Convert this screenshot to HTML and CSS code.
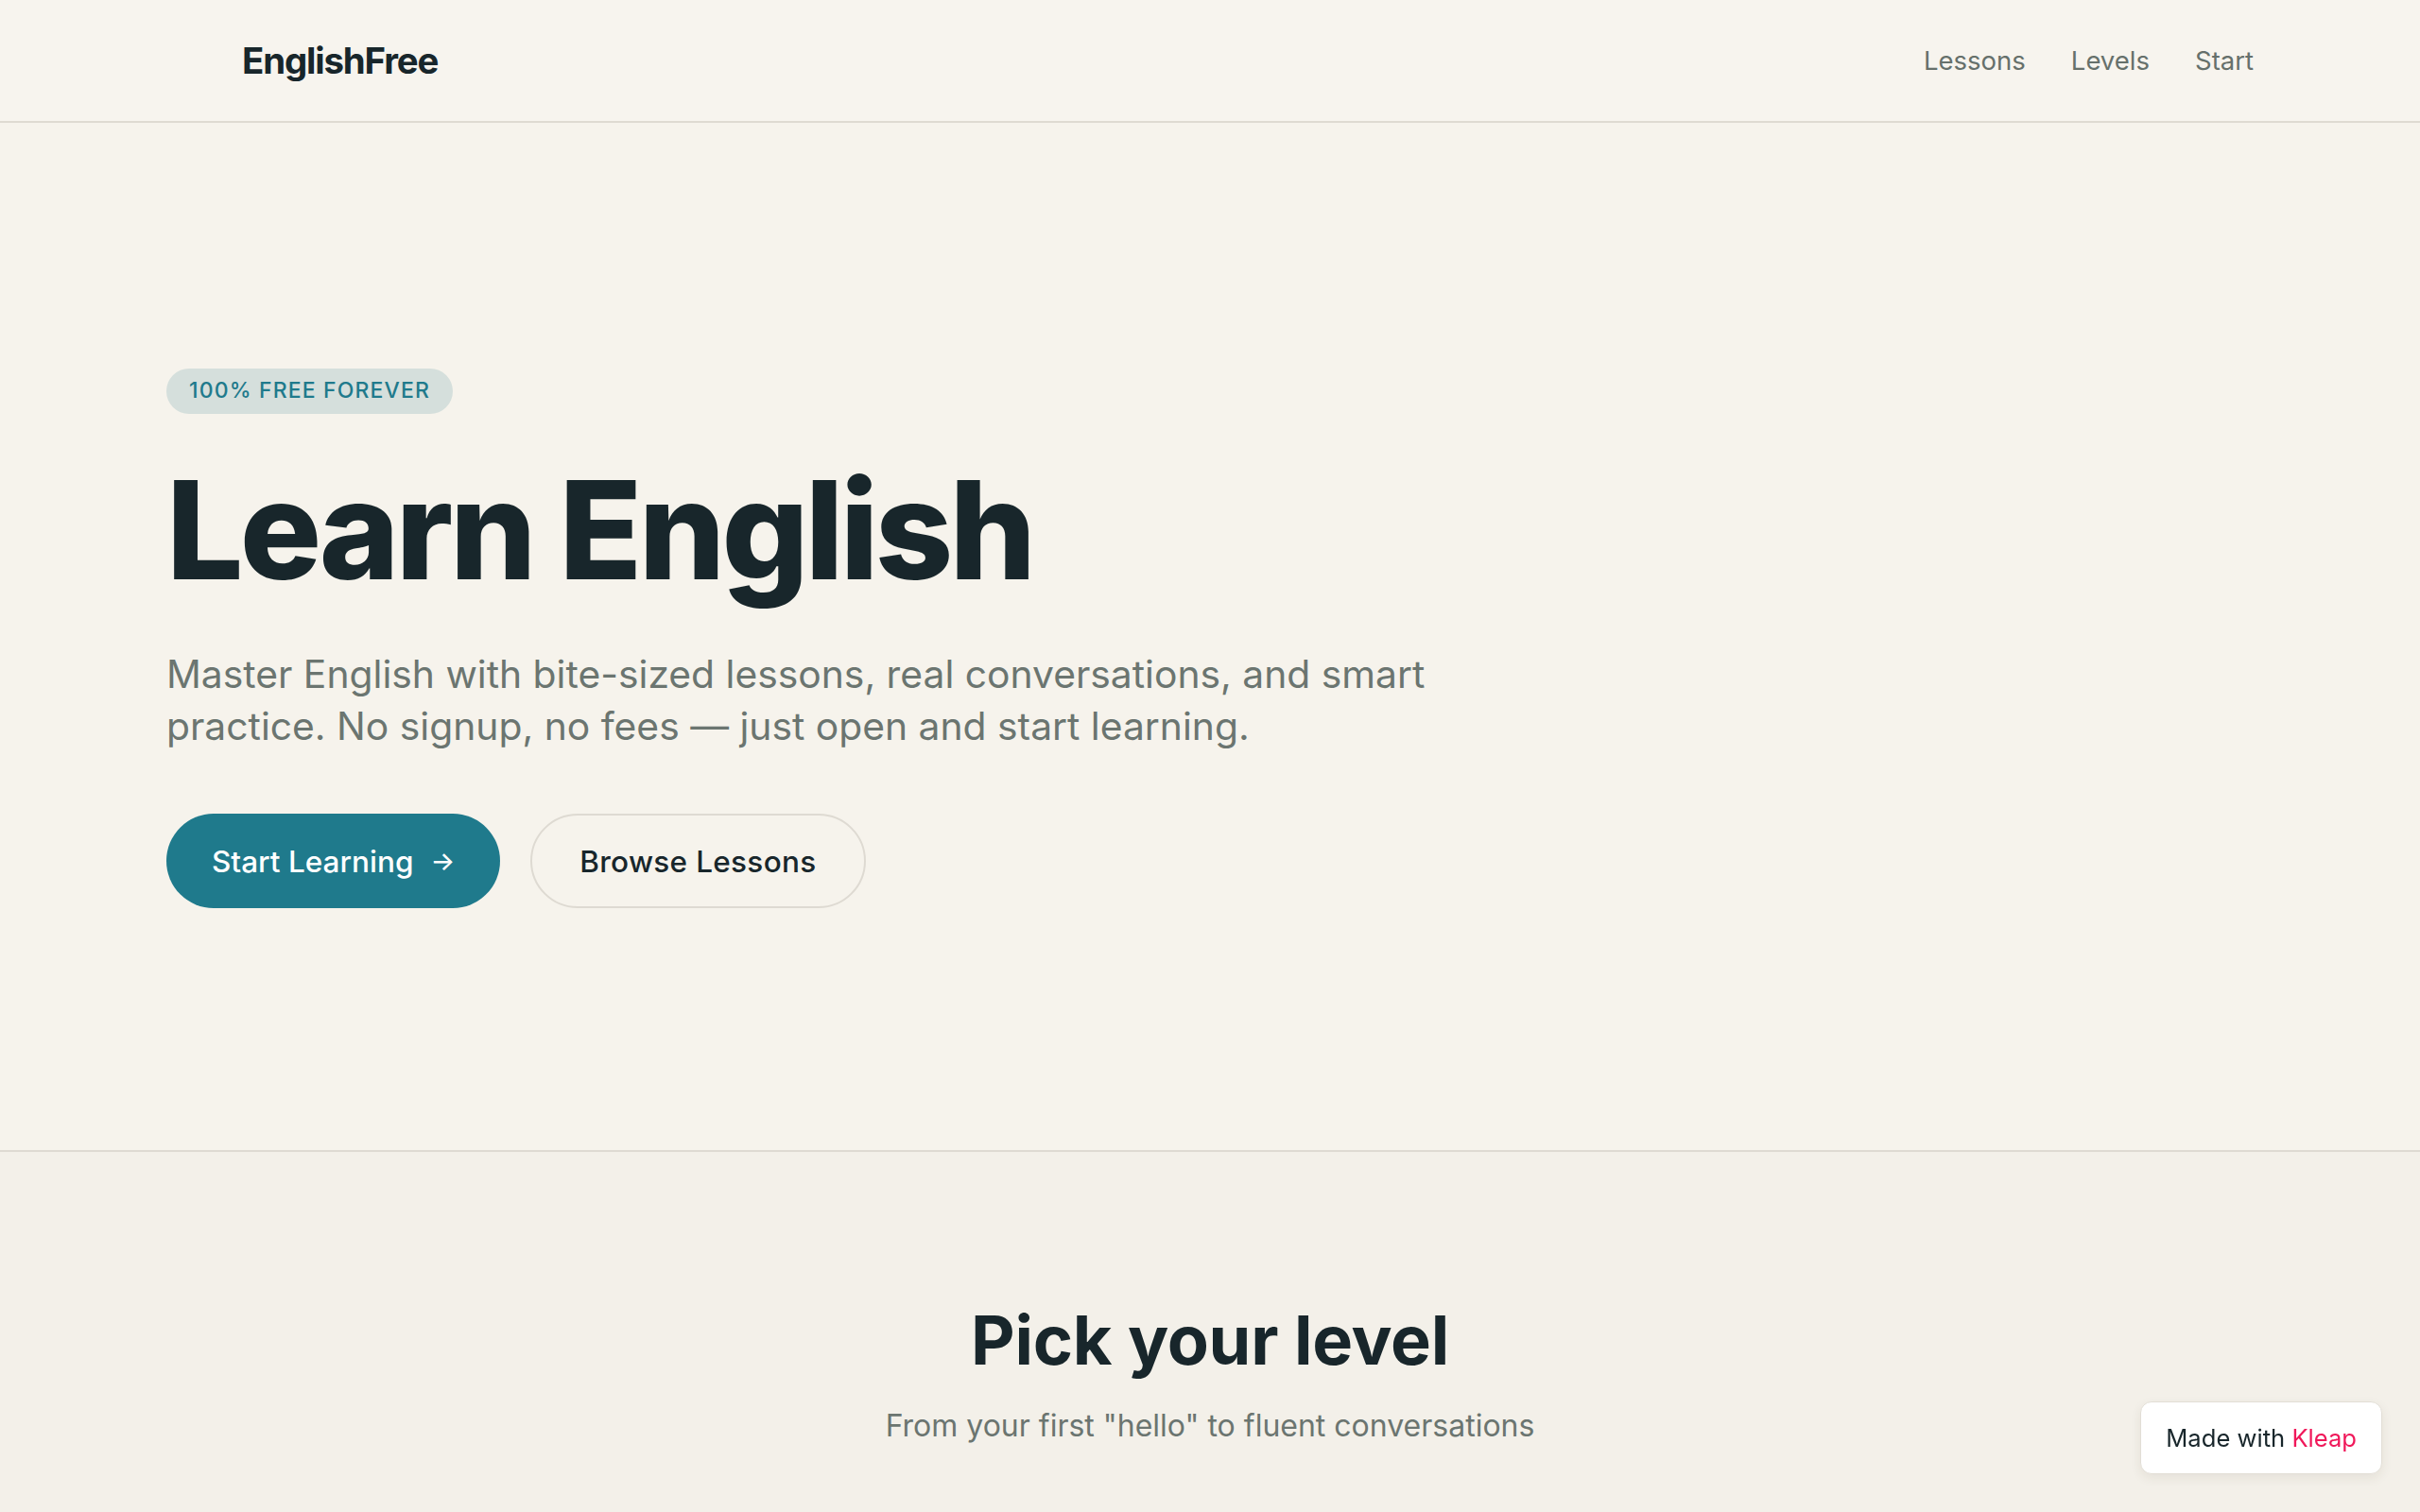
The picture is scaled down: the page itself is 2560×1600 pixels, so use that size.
FILE: index.html
```html
<!DOCTYPE html>
<html lang="en">
<head>
  <meta charset="utf-8">
  <title>EnglishFree - Learn English</title>
  <link rel="stylesheet" href="styles.css">
</head>
<body>
  <header class="topbar">
    <a class="logo" href="#">EnglishFree</a>
    <nav class="nav">
      <a href="#lessons">Lessons</a>
      <a href="#levels">Levels</a>
      <a href="#start">Start</a>
    </nav>
  </header>

  <section class="hero" id="start">
    <span class="badge">100% FREE FOREVER</span>
    <h1>Learn English</h1>
    <p class="lead">Master English with bite-sized lessons, real conversations, and smart practice. No signup, no fees — just open and start learning.</p>
    <div class="actions">
      <a class="btn btn-primary" href="#levels">Start Learning <span class="arrow">→</span></a>
      <a class="btn btn-outline" href="#lessons">Browse Lessons</a>
    </div>
  </section>

  <section class="levels" id="levels">
    <h2>Pick your level</h2>
    <p class="sub">From your first "hello" to fluent conversations</p>
  </section>

  <a class="made-with" href="#">Made with <span>Kleap</span></a>
</body>
</html>
```

FILE: styles.css
```css
body {
  margin: 0;
  font-family: Inter, "Noto Sans", Arial, sans-serif;
  background: #f6f3ec;
  color: #18262b;
}
a {
  color: inherit;
  text-decoration: none;
}

/* top bar */
.topbar {
  display: flex;
  align-items: center;
  justify-content: space-between;
  height: 128px;
  padding: 0 176px 0 256px;
  background: #f7f4ee;
  border-bottom: 2px solid #dedad2;
}
.logo {
  font-size: 38.4px;
  font-weight: 700;
  letter-spacing: -0.03em;
}
.nav {
  display: flex;
  gap: 48px;
}
.nav a {
  font-size: 27.5px;
  color: #66706b;
}

/* hero */
.hero {
  padding: 260px 176px 256px;
  border-bottom: 2px solid #dedad2;
}
.badge {
  display: inline-block;
  padding: 7px 24px;
  border-radius: 999px;
  background: #d5dfdc;
  color: #1f7a8c;
  font-size: 23px;
  font-weight: 500;
  line-height: 1.46;
  letter-spacing: 0.05em;
}
.hero h1 {
  margin: 44px 0 0;
  font-size: 144px;
  font-weight: 800;
  line-height: 1.1;
  letter-spacing: -0.026em;
}
.lead {
  max-width: 1380px;
  margin: 46px 0 0;
  font-size: 40.8px;
  line-height: 1.35;
  color: #6b7570;
}
.actions {
  display: flex;
  gap: 32px;
  margin-top: 65px;
}
.btn {
  display: inline-flex;
  align-items: center;
  gap: 18px;
  height: 100px;
  box-sizing: border-box;
  padding: 0 48px;
  border-radius: 999px;
  font-size: 31.5px;
  font-weight: 500;
}
.btn-primary {
  background: #1f7a8c;
  color: #fff;
}
.arrow {
  font-size: 27px;
}
.btn-outline {
  padding: 0 50px;
  border: 2px solid #dedad2;
  color: #18262b;
  letter-spacing: 0.01em;
}

/* levels */
.levels {
  background: #f3f0e9;
  padding: 156px 176px 240px;
  text-align: center;
}
.levels h2 {
  margin: 0;
  font-size: 72px;
  font-weight: 700;
  line-height: 1.2;
  letter-spacing: -0.004em;
}
.sub {
  margin: 26px 0 0;
  font-size: 32px;
  line-height: 1.4;
  color: #6b7570;
}

/* floating credit */
.made-with {
  position: fixed;
  right: 40px;
  bottom: 40px;
  padding: 22px 26px;
  background: #fff;
  border: 1px solid #e2ded6;
  border-radius: 12px;
  box-shadow: 0 4px 12px rgba(60, 50, 30, 0.08);
  font-size: 25.6px;
  color: #18262b;
}
.made-with span {
  color: #f0185a;
}
```
